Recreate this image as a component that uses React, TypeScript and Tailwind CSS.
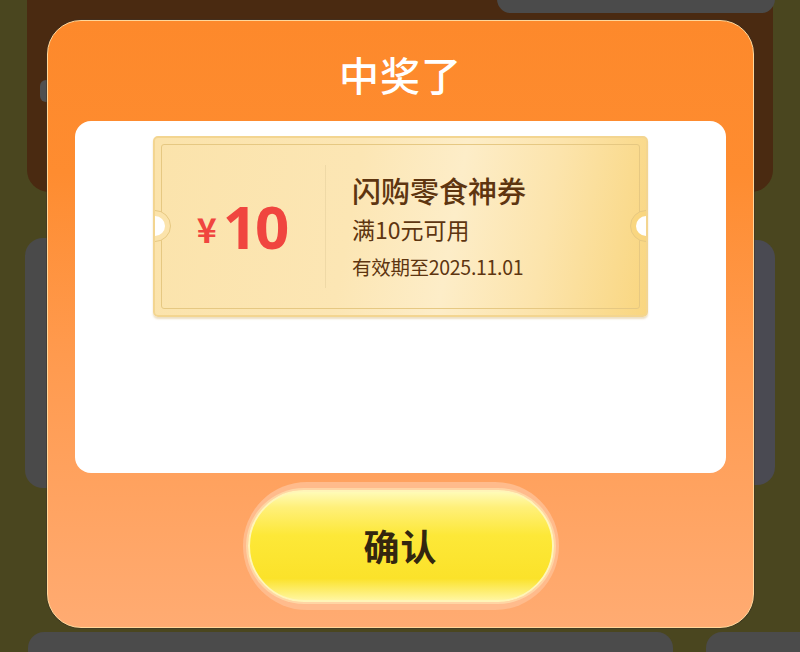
import React from "react";

const font = { fontFamily: '"Noto Sans CJK SC", "Noto Sans", sans-serif' };

export default function App() {
  return (
    <div className="relative w-[800px] h-[652px] overflow-hidden bg-[#4a461f]" style={font}>
      {/* backdrop of the page under the dialog */}
      <div className="absolute left-[27px] top-[-20px] w-[746px] h-[212px] rounded-[22px] bg-[#4a2a11]" />
      <div className="absolute left-[497px] top-[-20px] w-[278px] h-[33px] rounded-[14px] bg-[#4b4b4b]" />
      <div className="absolute left-[40px] top-[80px] w-[12px] h-[22px] rounded-[6px] bg-[#505050]" />
      <div className="absolute left-[25px] top-[238px] w-[40px] h-[250px] rounded-[18px] bg-[#4a4a4a]" />
      <div className="absolute left-[735px] top-[240px] w-[40px] h-[245px] rounded-[18px] bg-[#4a4a52]" />
      <div className="absolute left-[28px] top-[632px] w-[645px] h-[40px] rounded-[16px] bg-[#4b4b4b]" />
      <div className="absolute left-[706px] top-[632px] w-[120px] h-[40px] rounded-[16px] bg-[#4b4b4b]" />

      {/* dialog */}
      <div className="absolute left-[47px] top-[20px] w-[707px] h-[608px] rounded-[34px] border-[1.5px] border-[#ffd79a] bg-[linear-gradient(180deg,#fd892b_0%,#fe8c30_25%,#ff9a4e_55%,#ffab72_100%)] flex flex-col items-center shadow-[0_0_0_1px_rgba(60,50,40,0.5)]">
        <div className="h-[100px] flex items-center justify-center pt-[6px] text-white text-[40px] font-medium tracking-[1px]">
          中奖了
        </div>
        <div className="w-[651px] h-[352px] rounded-[16px] bg-white flex justify-center pt-[15px]">
          {/* coupon */}
          <div className="relative w-[495px] h-[181px] rounded-[5px] overflow-hidden border-[2px] border-[#f3d590] bg-[linear-gradient(100deg,#fbe3ab_0%,#fce6b4_40%,#fdedc8_60%,#fce4ac_78%,#f9d680_100%)] shadow-[0_2px_2px_rgba(200,160,80,0.35)] flex">
            <div className="absolute inset-[6px] rounded-[3px] border border-[#e6c882]" />
            {/* notches */}
            <div className="absolute left-[-16px] top-[72px] w-[32px] h-[32px] rounded-full border border-[#e6c882] bg-[#fbe3ab]" />
            <div className="absolute left-[-10px] top-[78px] w-[20px] h-[20px] rounded-full bg-white" />
            <div className="absolute right-[-16px] top-[72px] w-[32px] h-[32px] rounded-full border border-[#e6c882] bg-[#f9d680]" />
            <div className="absolute right-[-10px] top-[78px] w-[20px] h-[20px] rounded-full bg-white" />

            <div className="relative w-[170px] h-full flex items-center justify-center pl-[4px] pb-[2px] text-[#f0453f] font-bold">
              <span className="text-[34px] leading-none mr-[6px] mt-[6px]">¥</span>
              <span className="text-[60px] leading-none tracking-[-2px]" style={{ fontFamily: '"Noto Sans", "Liberation Sans", sans-serif' }}>10</span>
            </div>
            <div className="relative w-px my-[27px] bg-[#efd9a6]" />
            <div className="relative flex flex-col justify-center pl-[26px] pb-[2px] text-[#5e3510]">
              <div className="text-[29px] leading-[36px] font-medium">闪购零食神券</div>
              <div className="text-[23px] leading-[30px] mt-[6px]">满10元可用</div>
              <div className="text-[19.5px] leading-[26px] mt-[10px] tracking-[-0.3px]">有效期至2025.11.01</div>
            </div>
          </div>
        </div>
        {/* button */}
        <div className="mt-[9px] w-[316px] h-[128px] rounded-full bg-[#ffbb8c] flex items-center justify-center">
          <div className="w-[306px] h-[112px] rounded-full border-[2px] border-[#fff5b8] bg-[linear-gradient(180deg,#fffbb8_0%,#fff07a_14%,#fde838_40%,#fbe22a_80%,#fff6a0_100%)] shadow-[0_0_0_2px_rgba(255,230,180,0.6)] flex items-center justify-center">
            <span className="text-[36px] font-bold text-[#33260f] tracking-[1px] mt-[-2px]">确认</span>
          </div>
        </div>
      </div>
    </div>
  );
}
